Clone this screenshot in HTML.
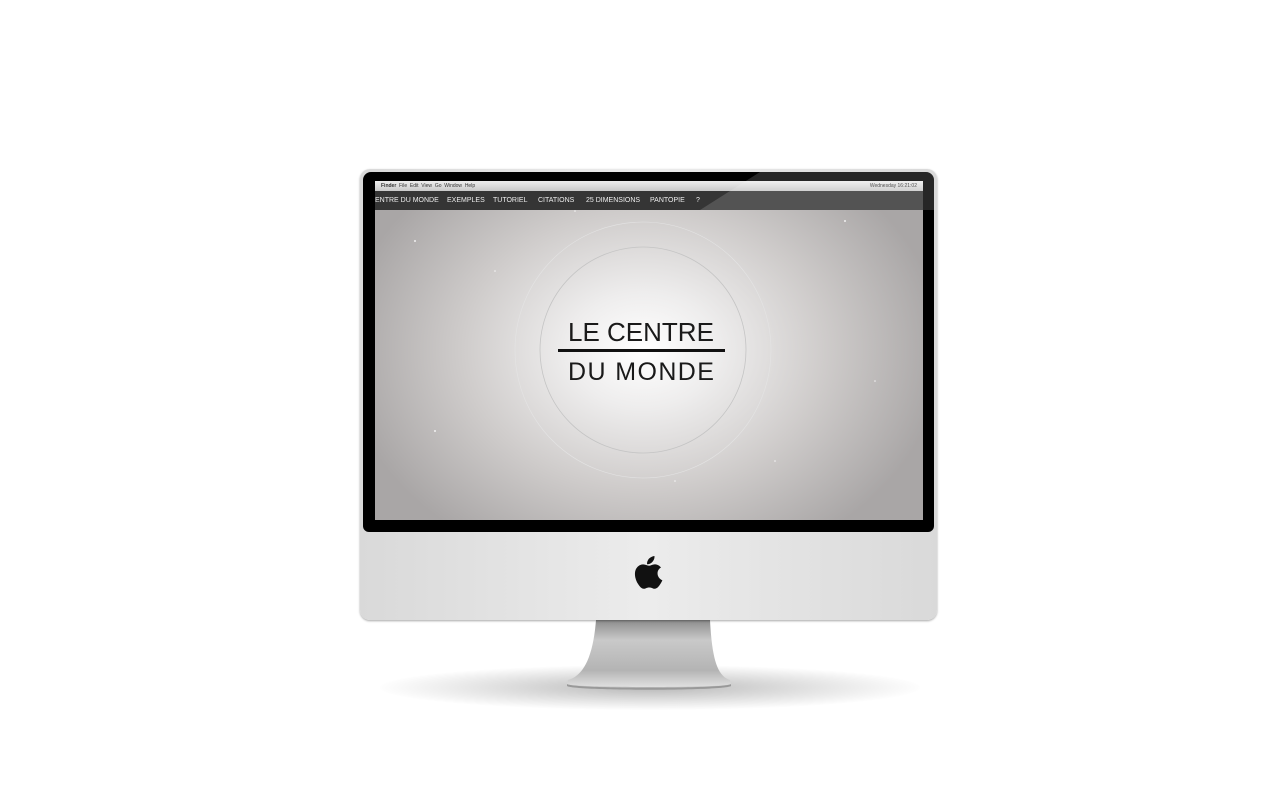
<!DOCTYPE html>
<html><head><meta charset="utf-8"><style>
*{margin:0;padding:0;box-sizing:border-box}
body{width:1280px;height:800px;background:#fff;position:relative;overflow:hidden;font-family:"Liberation Sans",sans-serif}
.abs{position:absolute}
#shadow{left:380px;top:665px;width:540px;height:45px;border-radius:50%;background:radial-gradient(ellipse at center,rgba(0,0,0,.28) 0%,rgba(0,0,0,.1) 45%,rgba(0,0,0,0) 72%)}
#stand{left:565px;top:618px;width:168px;height:72px}
#frame{left:360px;top:169px;width:577px;height:451px;border-radius:10px;background:linear-gradient(90deg,#d9d9d9,#ececec 50%,#d9d9d9);box-shadow:0 1px 2px rgba(0,0,0,.35)}
#bezel{left:363px;top:172px;width:571px;height:360px;border-radius:8px 8px 6px 6px;background:#000}
#screen{left:375px;top:181px;width:548px;height:339px;overflow:hidden;background:radial-gradient(ellipse 300px 230px at 268px 169px,#fff 0%,#eeeded 25%,#cfcccb 60%,#a9a6a6 100%)}
#menubar{left:375px;top:181px;width:548px;height:10px;background:linear-gradient(#eee,#c9c9c9);font-size:5px;color:#333;line-height:10px;padding-left:6px;white-space:nowrap}
#nav{left:375px;top:191px;width:548px;height:19px;background:#353535;font-size:7px;color:#eee;line-height:19px;white-space:nowrap}
#nav span{position:absolute;top:0}
#gloss{left:700px;top:172px;width:234px;height:38px;background:rgba(255,255,255,.15);clip-path:polygon(60px 0,234px 0,234px 38px,0 38px);border-top-right-radius:8px}
</style></head><body>
<div id="shadow" class="abs"></div>
<svg id="stand" class="abs" viewBox="0 0 168 72">
<defs><linearGradient id="sg" x1="0" y1="0" x2="0" y2="1"><stop offset="0" stop-color="#8c8c8c"/><stop offset=".3" stop-color="#c9c9c9"/><stop offset=".75" stop-color="#b4b4b4"/><stop offset="1" stop-color="#e0e0e0"/></linearGradient></defs>
<path d="M31 2 L145 2 C147 40 152 58 165 62 L166 66 C160 70 8 70 2 66 L3 62 C18 58 28 40 31 2Z" fill="url(#sg)"/>
<path d="M2 66 C8 71 160 71 166 66 L166 68 C160 73 8 73 2 68Z" fill="#999"/>
</svg>
<div id="frame" class="abs"></div>
<div id="bezel" class="abs"></div>
<div id="screen" class="abs">
<svg class="abs" style="left:0;top:0" width="548" height="339">
<circle cx="268" cy="169" r="103" fill="none" stroke="#c4c4c4" stroke-width="0.8"/>
<circle cx="268" cy="169" r="128" fill="none" stroke="#e4e4e4" stroke-width="0.6"/>
<g fill="#fff" opacity=".8"><circle cx="40" cy="60" r="1"/><circle cx="120" cy="90" r=".8"/><circle cx="470" cy="40" r="1"/><circle cx="500" cy="200" r=".8"/><circle cx="60" cy="250" r="1"/><circle cx="400" cy="280" r=".8"/><circle cx="200" cy="30" r=".8"/><circle cx="300" cy="300" r=".8"/></g>
</svg>
<div class="abs" style="left:193px;top:136px;font-size:26px;color:#1a1a1a;letter-spacing:0px">LE CENTRE</div>
<div class="abs" style="left:183px;top:168px;width:167px;height:3px;background:#111"></div>
<div class="abs" style="left:193px;top:177px;font-size:25px;color:#1a1a1a;letter-spacing:1.4px">DU MONDE</div>
</div>
<div id="menubar" class="abs"> <b>Finder</b>&nbsp; File &nbsp;Edit &nbsp;View &nbsp;Go &nbsp;Window &nbsp;Help<span style="position:absolute;right:6px">Wednesday 16:21:02</span></div>
<div id="nav" class="abs">
<span style="left:0">ENTRE DU MONDE</span><span style="left:72px">EXEMPLES</span><span style="left:118px">TUTORIEL</span><span style="left:163px">CITATIONS</span><span style="left:211px">25 DIMENSIONS</span><span style="left:275px">PANTOPIE</span><span style="left:321px">?</span>
</div>
<div id="gloss" class="abs"></div>
<svg class="abs" style="left:634px;top:556px" width="30" height="34" viewBox="0 0 24 28">
<path d="M16.5 0c.2 1.9-.6 3.6-1.7 4.8-1.1 1.2-2.8 2.1-4.4 2-.2-1.8.7-3.6 1.7-4.7C13.2 1 15 .1 16.5 0z" fill="#111"/>
<path d="M23 20c-.6 1.4-.9 2-1.7 3.2-1.1 1.7-2.7 3.8-4.6 3.8-1.7 0-2.2-1.1-4.5-1.1s-2.8 1.1-4.5 1.1C5.8 27 4.3 25.1 3.2 23.4 0 18.7-.3 13.1 1.6 10.2 3 8.1 5.1 6.9 7.1 6.9c2 0 3.3 1.1 5 1.100 1.6 0 2.6-1.1 4.9-1.1 1.8 0 3.6 1 4.9 2.6-4.3 2.4-3.6 8.5 1.1 10.5z" fill="#111"/>
</svg>
</body></html>
